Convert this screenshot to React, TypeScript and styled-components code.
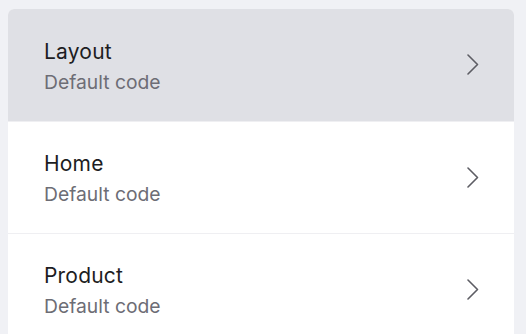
import styled, { createGlobalStyle } from "styled-components";

const GlobalStyle = createGlobalStyle`
  html, body {
    margin: 0;
    background: #f0f1f5;
    font-family: Inter, "Noto Sans", sans-serif;
  }
`;

const Page = styled.div`
  padding: 9px 12px 0 8px;
`;

const Panel = styled.ul`
  list-style: none;
  margin: 0;
  padding: 0;
  background: #ffffff;
  border-radius: 6px 6px 0 0;
  overflow: hidden;
`;

const Row = styled.li<{ $active?: boolean }>`
  display: flex;
  align-items: center;
  justify-content: space-between;
  height: 112px;
  padding: 0 34px 0 36px;
  box-sizing: border-box;
  background: ${(p) => (p.$active ? "#dfe0e5" : "#ffffff")};
  & + & {
    border-top: 1px solid #efeff2;
  }
`;

const Texts = styled.div`
  display: flex;
  flex-direction: column;
  margin-top: 3px;
`;

const Title = styled.div`
  font-size: 21px;
  line-height: 30px;
  letter-spacing: 0.2px;
  color: #1d1d22;
`;

const Sub = styled.div`
  font-size: 19.3px;
  line-height: 30px;
  color: #6d6d75;
`;

const Chevron = () => (
  <svg width="14" height="22" viewBox="0 0 14 22" fill="none">
    <path d="M2 1 L11.5 10.5 L2 20" stroke="#5d5d64" strokeWidth="1.6" strokeLinecap="round" strokeLinejoin="round" />
  </svg>
);

const items = [
  { title: "Layout", active: true },
  { title: "Home" },
  { title: "Product" },
];

export default function App() {
  return (
    <>
      <GlobalStyle />
      <Page>
        <Panel>
          {items.map((it) => (
            <Row key={it.title} $active={it.active}>
              <Texts>
                <Title>{it.title}</Title>
                <Sub>Default code</Sub>
              </Texts>
              <Chevron />
            </Row>
          ))}
        </Panel>
      </Page>
    </>
  );
}
